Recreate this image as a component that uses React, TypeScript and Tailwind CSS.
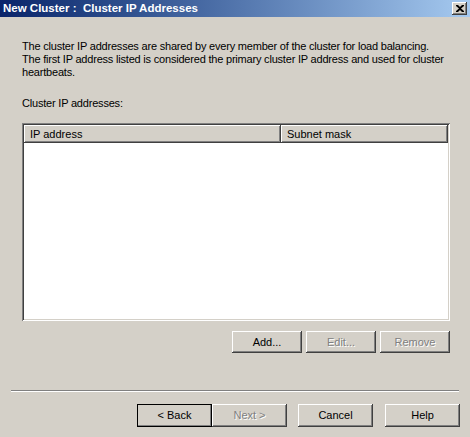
import React from 'react';

const raised =
  'shadow-[inset_-1px_-1px_#404040,inset_1px_1px_#ffffff,inset_-2px_-2px_#808080,inset_2px_2px_#d4d0c8]';

const Btn: React.FC<{ label: string; disabled?: boolean; focused?: boolean; className?: string }> = ({
  label,
  disabled,
  focused,
  className,
}) => (
  <div
    className={`flex items-center justify-center bg-[#d4d0c8] ${raised} ${
      focused ? 'outline outline-1 outline-black -outline-offset-1' : ''
    } ${className ?? ''}`}
  >
    <span
      className={
        disabled ? 'text-[#808080] [text-shadow:1px_1px_0_#ffffff]' : 'text-black'
      }
    >
      {label}
    </span>
  </div>
);

export default function App() {
  return (
    <div className="w-[470px] h-[437px] bg-[#d4d0c8] font-['Liberation_Sans',Arial,sans-serif] text-[11px] leading-[13px] text-black overflow-hidden flex flex-col">
      {/* title bar */}
      <div className="h-[17px] flex items-center justify-between bg-gradient-to-r from-[#0a246a] to-[#a6caf0] pl-[3px] pr-[3px]">
        <span className="text-white font-bold text-[11.5px]">New Cluster :&nbsp; Cluster IP Addresses</span>
        <div className={`w-[15px] h-[13px] bg-[#d4d0c8] ${raised} flex items-center justify-center`}>
          <svg width="8" height="7" viewBox="0 0 8 7">
            <path d="M0 0h2l2 2 2-2h2v1L5 3.5 8 6v1H6L4 5 2 7H0V6l3-2.5L0 1z" fill="#000" />
          </svg>
        </div>
      </div>

      <div className="flex flex-col pl-[22px] pr-[18px] pt-[23px]">
        <p className="tracking-[-0.2px]">
          The cluster IP addresses are shared by every member of the cluster for load balancing.
          <br />
          The first IP address listed is considered the primary cluster IP address and used for cluster
          heartbeats.
        </p>
        <div className="mt-[18px] tracking-[-0.2px]">Cluster IP addresses:</div>

        {/* list view */}
        <div className="mt-[13px] w-[428px] h-[198px] bg-white shadow-[inset_1px_1px_#808080,inset_-1px_-1px_#ffffff,inset_2px_2px_#404040,inset_-2px_-2px_#d4d0c8] p-[2px] flex flex-col">
          <div className="flex h-[18px]">
            <div className={`w-[257px] bg-[#d4d0c8] ${raised} flex items-center pl-[6px]`}>IP address</div>
            <div className={`flex-1 bg-[#d4d0c8] ${raised} flex items-center pl-[6px]`}>Subnet mask</div>
          </div>
        </div>

        <div className="mt-[10px] flex justify-end gap-[4px] w-[428px]">
          <Btn label="Add..." className="w-[70px] h-[22px]" />
          <Btn label="Edit..." disabled className="w-[70px] h-[22px]" />
          <Btn label="Remove" disabled className="w-[70px] h-[22px]" />
        </div>
      </div>

      {/* separator */}
      <div className="mt-[37px] mx-[11px] h-[2px] border-t border-[#808080] border-b border-b-white" />

      <div className="mt-[12px] flex justify-end pr-[10px]">
        <Btn label="< Back" focused className="w-[75px] h-[23px]" />
        <Btn label="Next >" disabled className="w-[75px] h-[23px]" />
        <Btn label="Cancel" className="w-[75px] h-[23px] ml-[11px]" />
        <Btn label="Help" className="w-[75px] h-[23px] ml-[12px]" />
      </div>
    </div>
  );
}
